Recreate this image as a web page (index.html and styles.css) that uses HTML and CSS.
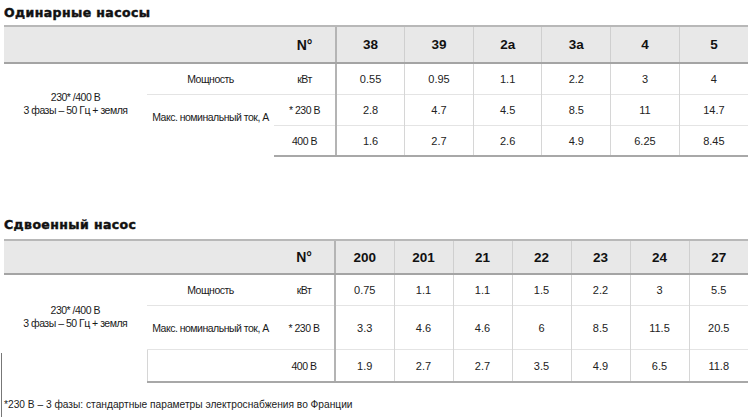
FILE: index.html
```html
<!DOCTYPE html>
<html lang="ru">
<head>
<meta charset="utf-8">
<title>Насосы</title>
<link rel="stylesheet" href="styles.css">
</head>
<body>
<div class="page">
  <h2 class="title title-first">Одинарные насосы</h2>
  <table class="spec spec-single">
    <colgroup>
      <col class="c-a"><col class="c-b"><col class="c-c">
      <col><col><col><col><col><col>
    </colgroup>
    <thead>
      <tr>
        <th colspan="2"></th>
        <th class="no">N°</th>
        <th class="first-data">38</th><th>39</th><th>2a</th><th>3a</th><th>4</th><th>5</th>
      </tr>
    </thead>
    <tbody>
      <tr class="r1">
        <td rowspan="3" class="lbl supply">230* /400 B<br>3 фазы – 50 Гц + земля</td>
        <td class="lbl">Мощность</td>
        <td class="lbl">кВт</td>
        <td class="first-data">0.55</td><td>0.95</td><td>1.1</td><td>2.2</td><td>3</td><td>4</td>
      </tr>
      <tr class="r2">
        <td rowspan="2" class="lbl maxi sep">Макс. номинальный ток, А</td>
        <td class="lbl sep">* 230 B</td>
        <td class="first-data sep">2.8</td><td class="sep">4.7</td><td class="sep">4.5</td><td class="sep">8.5</td><td class="sep">11</td><td class="sep">14.7</td>
      </tr>
      <tr class="r3">
        <td class="lbl sep">400 B</td>
        <td class="first-data sep">1.6</td><td class="sep">2.7</td><td class="sep">2.6</td><td class="sep">4.9</td><td class="sep">6.25</td><td class="sep">8.45</td>
      </tr>
    </tbody>
  </table>

  <h2 class="title title-second">Сдвоенный насос</h2>
  <table class="spec spec-double">
    <colgroup>
      <col class="c-a"><col class="c-b"><col class="c-c2">
      <col><col><col><col><col><col><col>
    </colgroup>
    <thead>
      <tr>
        <th colspan="2"></th>
        <th class="no">N°</th>
        <th class="first-data">200</th><th>201</th><th>21</th><th>22</th><th>23</th><th>24</th><th>27</th>
      </tr>
    </thead>
    <tbody>
      <tr class="d1">
        <td rowspan="3" class="lbl supply2">230* /400 B<br>3 фазы – 50 Гц + земля</td>
        <td class="lbl">Мощность</td>
        <td class="lbl">кВт</td>
        <td class="first-data">0.75</td><td>1.1</td><td>1.1</td><td>1.5</td><td>2.2</td><td>3</td><td>5.5</td>
      </tr>
      <tr class="d2">
        <td class="lbl sep">Макс. номинальный ток, А</td>
        <td class="lbl sep">* 230 B</td>
        <td class="first-data sep">3.3</td><td class="sep">4.6</td><td class="sep">4.6</td><td class="sep">6</td><td class="sep">8.5</td><td class="sep">11.5</td><td class="sep">20.5</td>
      </tr>
      <tr class="d3">
        <td class="sep"></td>
        <td class="lbl sep">400 B</td>
        <td class="first-data sep">1.9</td><td class="sep">2.7</td><td class="sep">2.7</td><td class="sep">3.5</td><td class="sep">4.9</td><td class="sep">6.5</td><td class="sep">11.8</td>
      </tr>
    </tbody>
  </table>

  <p class="note">*230 B – 3 фазы: стандартные параметры электроснабжения во Франции</p>
</div>
</body>
</html>
```

FILE: styles.css
```css
html, body {
  margin: 0;
  padding: 0;
  background: #ffffff;
}

.page {
  position: relative;
  width: 750px;
  height: 417px;
  padding: 0 0 0 4px;
  box-sizing: border-box;
  font-family: "Liberation Sans", Arial, sans-serif;
  color: #1a1a1a;
  overflow: hidden;
}

.page::before {
  content: "";
  position: absolute;
  left: 1px;
  top: 353px;
  width: 1px;
  height: 64px;
  background: #777;
}

.title {
  margin: 0;
  font-family: "DejaVu Sans", sans-serif;
  font-weight: bold;
  font-size: 12.5px;
  line-height: 16px;
  letter-spacing: 0.4px;
  color: #111;
  -webkit-text-stroke: 0.45px #111;
}

.title-first {
  padding-top: 5px;
  height: 25px;
  box-sizing: border-box;
}

.title-second {
  margin-top: 53px;
  height: 29px;
  padding-top: 7px;
  box-sizing: border-box;
}

.spec {
  border-collapse: collapse;
  table-layout: fixed;
  width: 744px;
  font-size: 11px;
  text-align: center;
}

.c-a { width: 143px; }
.c-b { width: 127px; }
.c-c { width: 62px; }
.c-c2 { width: 61px; }

.spec th {
  background: #e8e8e8;
  border-top: 2px solid #b8b8b8;
  border-bottom: 2px solid #a4a4a4;
  border-left: 1px solid #cfcfcf;
  font-size: 13.5px;
  font-weight: bold;
  color: #111;
  padding: 0;
}

.spec th:first-child {
  border-left: none;
}

.spec th.no {
  border-left: none;
  font-size: 14px;
}

.spec-single th { height: 35px; }
.spec-double th { height: 32px; }

.spec td {
  padding: 0;
  border-left: 1px solid #d6d6d6;
  color: #222;
}

.spec td.lbl {
  border-left: none;
  font-size: 10.5px;
  letter-spacing: -0.5px;
  color: #1a1a1a;
}

.spec .first-data {
  border-left: 2px solid #b4b4b4;
}

.spec td.sep {
  border-top: 1px solid #e4e4e4;
}

.spec tbody tr:last-child td {
  border-bottom: 2px solid #a8a8a8;
}

.spec-single .r1 td { height: 30px; }
.spec-single .r2 td { height: 30px; }
.spec-single .r3 td { height: 29px; }

.spec td.maxi {
  vertical-align: middle;
  padding-bottom: 18px;
}

.spec td.supply {
  padding-bottom: 12px;
  line-height: 13px;
}

.spec-double .d1 td { height: 30px; }
.spec-double .d2 td { height: 43px; }
.spec-double .d3 td { height: 31px; }

.spec td.supply2 {
  padding-bottom: 23px;
  line-height: 13px;
}

.note {
  margin: 15px 0 0 0;
  font-size: 10.2px;
  line-height: 13px;
  color: #1a1a1a;
}
```
